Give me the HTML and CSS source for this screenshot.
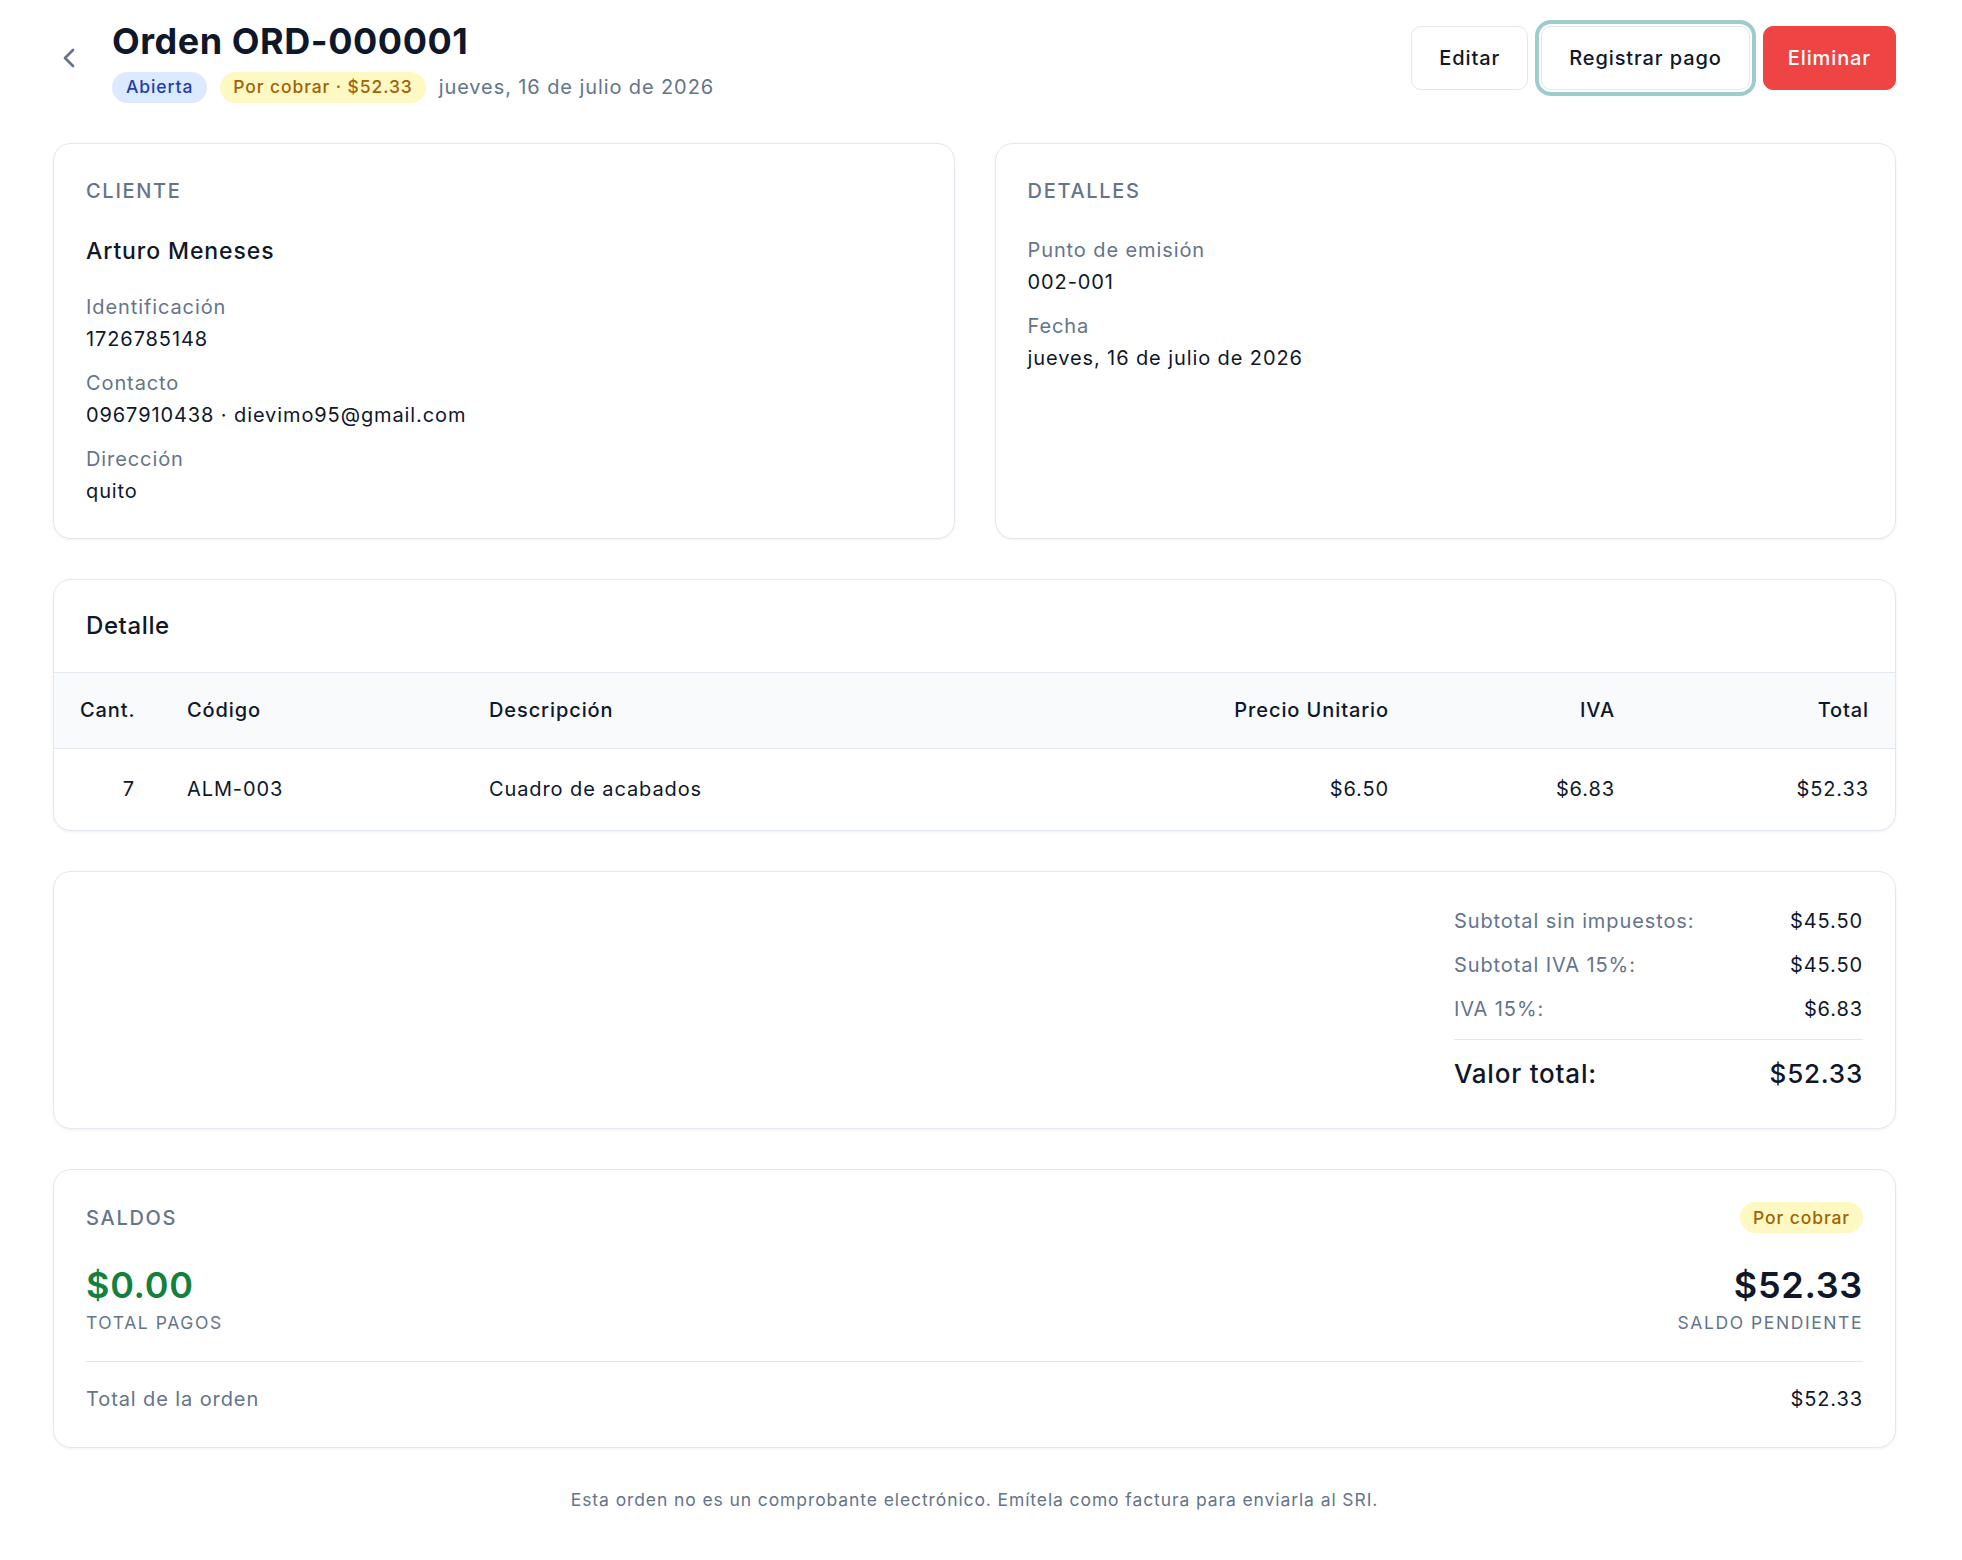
FILE: index.html
```html
<!DOCTYPE html>
<html lang="es">
<head>
  <meta charset="UTF-8" />
  <meta name="viewport" content="width=device-width, initial-scale=1.0" />
  <title>Orden ORD-000001</title>
  <link rel="stylesheet" href="styles.css">
</head>
<body>
  <div class="page">
    <header class="page-header">
      <div class="header-left">
        <a class="back-link" href="#" aria-label="Volver">
          <svg width="32" height="32" viewBox="0 0 24 24" fill="none" stroke="currentColor" stroke-width="2" stroke-linecap="round" stroke-linejoin="round"><polyline points="15 18 9 12 15 6"></polyline></svg>
        </a>
        <div class="title-block">
          <h1>Orden ORD-000001</h1>
          <div class="meta">
            <span class="badge badge-blue">Abierta</span>
            <span class="badge badge-yellow">Por cobrar · $52.33</span>
            <span class="meta-date">jueves, 16 de julio de 2026</span>
          </div>
        </div>
      </div>
      <div class="actions">
        <button class="btn">Editar</button>
        <button class="btn btn-focus">Registrar pago</button>
        <button class="btn btn-danger">Eliminar</button>
      </div>
    </header>

    <section class="info-grid">
      <div class="card">
        <h2 class="card-label">Cliente</h2>
        <p class="client-name">Arturo Meneses</p>
        <dl class="fields">
          <div class="field">
            <dt>Identificación</dt>
            <dd>1726785148</dd>
          </div>
          <div class="field">
            <dt>Contacto</dt>
            <dd>0967910438 · dievimo95@gmail.com</dd>
          </div>
          <div class="field">
            <dt>Dirección</dt>
            <dd>quito</dd>
          </div>
        </dl>
      </div>

      <div class="card">
        <h2 class="card-label">Detalles</h2>
        <dl class="fields">
          <div class="field">
            <dt>Punto de emisión</dt>
            <dd>002-001</dd>
          </div>
          <div class="field">
            <dt>Fecha</dt>
            <dd>jueves, 16 de julio de 2026</dd>
          </div>
        </dl>
      </div>
    </section>

    <section class="card card-flush">
      <h3 class="card-heading">Detalle</h3>
      <table class="items">
        <colgroup>
          <col class="col-qty">
          <col class="col-code">
          <col>
          <col class="col-price">
          <col class="col-iva">
          <col class="col-total">
        </colgroup>
        <thead>
          <tr>
            <th class="num">Cant.</th>
            <th>Código</th>
            <th>Descripción</th>
            <th class="num">Precio Unitario</th>
            <th class="num">IVA</th>
            <th class="num">Total</th>
          </tr>
        </thead>
        <tbody>
          <tr>
            <td class="num">7</td>
            <td>ALM-003</td>
            <td>Cuadro de acabados</td>
            <td class="num">$6.50</td>
            <td class="num">$6.83</td>
            <td class="num">$52.33</td>
          </tr>
        </tbody>
      </table>
    </section>

    <section class="card card-totals">
      <div class="totals">
        <div class="totals-row">
          <span class="totals-label">Subtotal sin impuestos:</span>
          <span>$45.50</span>
        </div>
        <div class="totals-row">
          <span class="totals-label">Subtotal IVA 15%:</span>
          <span>$45.50</span>
        </div>
        <div class="totals-row">
          <span class="totals-label">IVA 15%:</span>
          <span>$6.83</span>
        </div>
        <div class="totals-row totals-grand">
          <span>Valor total:</span>
          <span>$52.33</span>
        </div>
      </div>
    </section>

    <section class="card card-balance">
      <div class="balance-top">
        <h2 class="card-label">Saldos</h2>
        <span class="badge badge-yellow">Por cobrar</span>
      </div>
      <div class="balance-figures">
        <div>
          <div class="amount amount-green">$0.00</div>
          <div class="amount-label">Total pagos</div>
        </div>
        <div class="right">
          <div class="amount">$52.33</div>
          <div class="amount-label">Saldo pendiente</div>
        </div>
      </div>
      <div class="balance-foot">
        <span class="muted">Total de la orden</span>
        <span>$52.33</span>
      </div>
    </section>

    <p class="footnote">Esta orden no es un comprobante electrónico. Emítela como factura para enviarla al SRI.</p>
  </div>
</body>
</html>
```

FILE: styles.css
```css
:root {
  --text: #0f172a;
  --muted: #64748b;
  --border: #e2e8f0;
  --head-bg: #f8fafc;
  --danger: #ef4444;
  --green: #15803d;
}

* {
  box-sizing: border-box;
}

body {
  margin: 0;
  font-family: Inter, "Noto Sans", sans-serif;
  color: var(--text);
  background: #fff;
  font-size: 20px;
  line-height: 28px;
  letter-spacing: 0.045em;
}

.page {
  padding: 19px 66px 40px 53px;
  display: flex;
  flex-direction: column;
  gap: 40px;
}

/* header */
.page-header {
  display: flex;
  justify-content: space-between;
  align-items: flex-start;
}

.header-left {
  display: flex;
  align-items: flex-start;
}

.back-link {
  display: flex;
  color: var(--muted);
  margin-top: 23px;
  margin-right: 27px;
}

.title-block h1 {
  margin: 0;
  font-size: 36px;
  line-height: 44px;
  font-weight: 700;
  letter-spacing: 0.015em;
}

.meta {
  display: flex;
  align-items: center;
  gap: 13px;
  margin-top: 8px;
  height: 32px;
}

.badge {
  display: inline-flex;
  align-items: center;
  height: 31px;
  padding: 0 13px;
  border-radius: 999px;
  font-size: 17.5px;
  line-height: 24px;
  font-weight: 500;
}

.badge-blue {
  background: #dbeafe;
  color: #1e40af;
  padding: 0 14px;
}

.badge-yellow {
  background: #fef9c3;
  color: #a16207;
}

.meta-date {
  color: var(--muted);
}

.actions {
  display: flex;
  gap: 13px;
  margin-top: 7px;
}

.btn {
  font-family: inherit;
  font-size: 20px;
  line-height: 28px;
  font-weight: 500;
  letter-spacing: inherit;
  color: var(--text);
  background: #fff;
  border: 1px solid var(--border);
  border-radius: 10px;
  padding: 17px 27px;
  cursor: pointer;
}

.btn-focus {
  box-shadow: 0 0 0 2px #fff, 0 0 0 6px #9ccccc;
}

.btn-danger {
  background: var(--danger);
  border-color: var(--danger);
  color: #fff;
  padding: 17px 24px;
}

/* cards */
.info-grid {
  display: grid;
  grid-template-columns: 1fr 1fr;
  gap: 40px;
}

.info-grid .card {
  padding-bottom: 33px;
}

.card {
  background: #fff;
  border: 1px solid var(--border);
  border-radius: 18px;
  padding: 32px;
  box-shadow: 0 1px 3px rgba(15, 23, 42, 0.06);
}

.card-label {
  margin: 0 0 30px;
  font-size: 20px;
  line-height: 30px;
  font-weight: 500;
  text-transform: uppercase;
  letter-spacing: 0.085em;
  color: var(--muted);
}

.client-name {
  margin: 0 0 27px;
  font-size: 23px;
  line-height: 30px;
  font-weight: 500;
}

.fields {
  margin: 0;
  display: flex;
  flex-direction: column;
  gap: 16px;
}

.field dt {
  color: var(--muted);
}

.field dd {
  margin: 4px 0 0;
}

/* items table */
.card-flush {
  padding: 0;
  overflow: hidden;
}

.card-heading {
  margin: 0;
  padding: 32px;
  font-size: 24px;
  line-height: 28px;
  font-weight: 500;
  letter-spacing: 0.025em;
  border-bottom: 1px solid var(--border);
}

.items {
  width: 100%;
  border-collapse: collapse;
  table-layout: fixed;
}

.col-qty { width: 107px; }
.col-code { width: 302px; }
.col-price { width: 300px; }
.col-iva { width: 226px; }
.col-total { width: 254px; }

.items th {
  background: var(--head-bg);
  font-weight: 500;
  text-align: left;
  padding: 23px 26px 24px;
  border-bottom: 1px solid var(--border);
}

.items td {
  padding: 26px 26px 27px;
}

.items .num {
  text-align: right;
}

/* totals */
.card-totals {
  display: flex;
  justify-content: flex-end;
  padding: 35px 32px 36px;
}

.totals {
  width: 409px;
  display: flex;
  flex-direction: column;
  gap: 16px;
}

.totals-row {
  display: flex;
  justify-content: space-between;
}

.totals-label {
  color: var(--muted);
}

.totals-grand {
  border-top: 1px solid var(--border);
  padding-top: 16px;
  font-size: 26px;
  line-height: 36px;
  font-weight: 500;
  letter-spacing: 0.03em;
}

/* balance */
.card-balance {
  padding-bottom: 34px;
}

.balance-top {
  display: flex;
  justify-content: space-between;
  align-items: center;
}

.balance-top .card-label {
  margin: 0;
}

.balance-figures {
  display: flex;
  justify-content: space-between;
  margin-top: 32px;
  padding-bottom: 26px;
  border-bottom: 1px solid var(--border);
}

.balance-figures .right {
  text-align: right;
}

.amount {
  font-size: 36px;
  line-height: 40px;
  font-weight: 600;
  letter-spacing: 0.02em;
}

.amount-green {
  color: var(--green);
}

.amount-label {
  margin-top: 6px;
  font-size: 17.5px;
  line-height: 24px;
  text-transform: uppercase;
  letter-spacing: 0.09em;
  color: var(--muted);
}

.balance-foot {
  display: flex;
  justify-content: space-between;
  padding-top: 23px;
}

.muted {
  color: var(--muted);
}

.footnote {
  margin: 0;
  text-align: center;
  font-size: 17.5px;
  line-height: 24px;
  color: var(--muted);
}
```
